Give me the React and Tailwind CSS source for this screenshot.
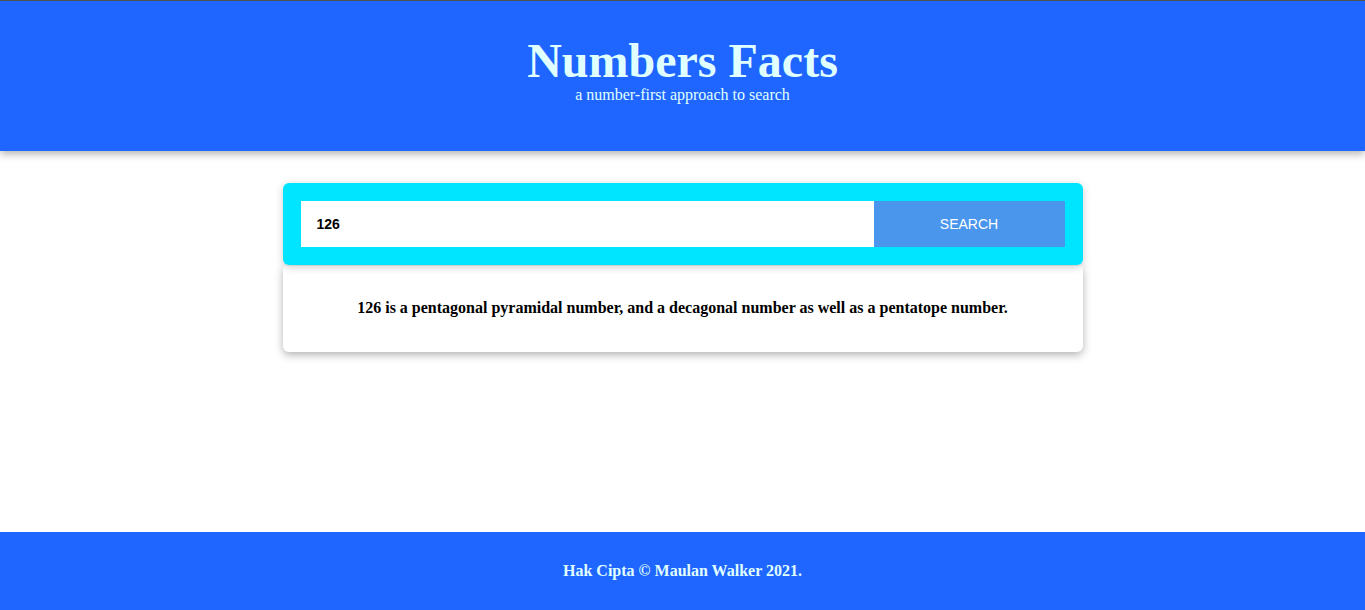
import React, { useState } from "react";

function App() {
  const [query, setQuery] = useState("126");
  const fact =
    "126 is a pentagonal pyramidal number, and a decagonal number as well as a pentatope number.";

  return (
    <div className="min-h-[610px] flex flex-col bg-white font-['Liberation_Serif',serif]">
      <div className="h-px bg-[#555555]" />
      <header className="h-[150px] bg-[#1e66ff] shadow-[0_3px_8px_rgba(0,0,0,0.3)] flex flex-col items-center pt-[32px] relative z-10">
        <h1 className="text-[48px] font-bold leading-[56px] text-[#e0ffff]">Numbers Facts</h1>
        <p className="text-[16px] leading-[18px] text-[#e0ffff] -mt-[3px]">a number-first approach to search</p>
      </header>

      <main className="flex-1 flex flex-col items-center pt-8">
        <div className="w-[800px]">
          <div className="bg-[#00e5ff] rounded-md p-[18px] flex shadow-[0_2px_8px_rgba(0,0,0,0.2)] relative z-10">
            <input
              value={query}
              onChange={(e) => setQuery(e.target.value)}
              className="flex-1 h-[46px] bg-white px-4 text-[14px] font-bold text-black outline-none font-['Liberation_Sans',sans-serif]"
            />
            <button className="w-[191px] h-[46px] bg-[#4a96ec] text-white text-[14px] font-['Liberation_Sans',sans-serif]">
              SEARCH
            </button>
          </div>
          <div className="mt-px bg-white rounded-b-md shadow-[0_3px_8px_rgba(0,0,0,0.3)] h-[86px] flex items-center justify-center">
            <p className="text-[16px] font-bold text-black -mt-[3px]">{fact}</p>
          </div>
        </div>
      </main>

      <footer className="h-[78px] bg-[#1e66ff] flex items-center justify-center">
        <p className="text-[16px] font-bold text-[#e0ffff]">Hak Cipta © Maulan Walker 2021.</p>
      </footer>
    </div>
  );
}

export default App;
